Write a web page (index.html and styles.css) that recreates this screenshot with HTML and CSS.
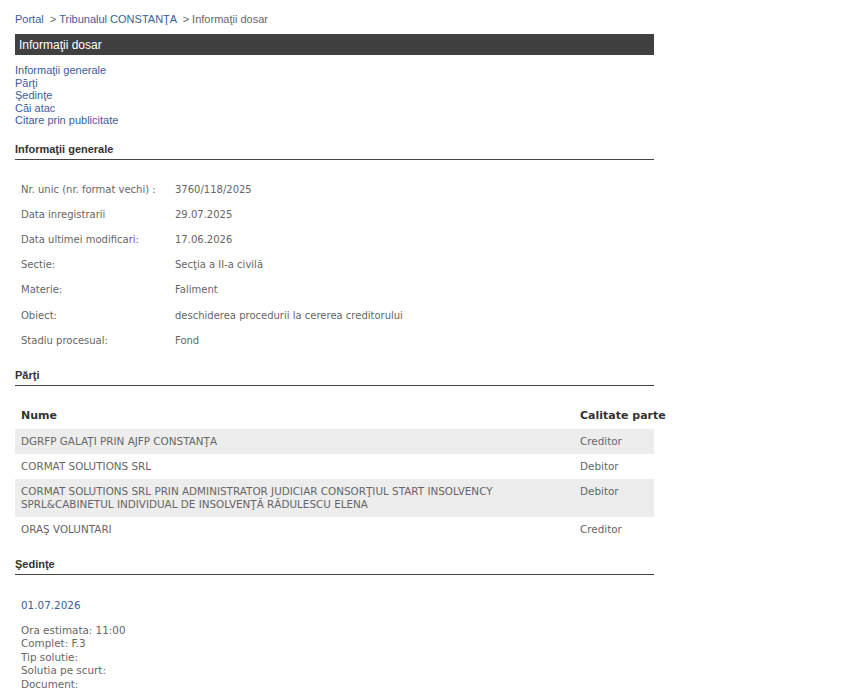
FILE: index.html
```html
<!DOCTYPE html>
<html lang="ro">
<head>
    <meta charset="UTF-8">
    <title>Informaţii dosar</title>
    <link rel="stylesheet" href="styles.css">
</head>
<body>
    <div class="page">
        <div class="breadcrumb">
            <a href="#">Portal</a> &nbsp;&gt; <a href="#">Tribunalul CONSTANŢA</a> &nbsp;&gt; Informaţii dosar
        </div>

        <div class="title-bar">Informaţii dosar</div>

        <ul class="anchors">
            <li><a href="#generale">Informaţii generale</a></li>
            <li><a href="#parti">Părţi</a></li>
            <li><a href="#sedinte">Şedinţe</a></li>
            <li><a href="#cai">Căi atac</a></li>
            <li><a href="#citare">Citare prin publicitate</a></li>
        </ul>

        <h2 class="section-title" id="generale">Informaţii generale</h2>
        <table class="info">
            <tr><td class="label">Nr. unic (nr. format vechi) :</td><td>3760/118/2025</td></tr>
            <tr><td class="label">Data inregistrarii</td><td>29.07.2025</td></tr>
            <tr><td class="label">Data ultimei modificari:</td><td>17.06.2026</td></tr>
            <tr><td class="label">Sectie:</td><td>Secţia a II-a civilă</td></tr>
            <tr><td class="label">Materie:</td><td>Faliment</td></tr>
            <tr><td class="label">Obiect:</td><td>deschiderea procedurii la cererea creditorului</td></tr>
            <tr><td class="label">Stadiu procesual:</td><td>Fond</td></tr>
        </table>

        <h2 class="section-title" id="parti">Părţi</h2>
        <table class="parties">
            <colgroup>
                <col>
                <col class="role-col">
            </colgroup>
            <thead>
                <tr><th>Nume</th><th>Calitate parte</th></tr>
            </thead>
            <tbody>
                <tr><td>DGRFP GALAŢI PRIN AJFP CONSTANŢA</td><td>Creditor</td></tr>
                <tr><td>CORMAT SOLUTIONS SRL</td><td>Debitor</td></tr>
                <tr><td>CORMAT SOLUTIONS SRL PRIN ADMINISTRATOR JUDICIAR CONSORŢIUL START INSOLVENCY SPRL&amp;CABINETUL INDIVIDUAL DE INSOLVENŢĂ RĂDULESCU ELENA</td><td>Debitor</td></tr>
                <tr><td>ORAŞ VOLUNTARI</td><td>Creditor</td></tr>
            </tbody>
        </table>

        <h2 class="section-title" id="sedinte">Şedinţe</h2>
        <div class="hearing">
            <div class="hearing-date">01.07.2026</div>
            <div class="hearing-details">
                Ora estimata: 11:00<br>
                Complet: F.3<br>
                Tip solutie:<br>
                Solutia pe scurt:<br>
                Document:
            </div>
        </div>
    </div>
</body>
</html>
```

FILE: styles.css
```css
body {
    margin: 0;
    background: #fff;
    font-family: "Liberation Sans", Arial, sans-serif;
    color: #555;
}
a {
    color: #3b5e98;
    text-decoration: none;
}
.page {
    width: 639px;
    padding: 12px 15px 0;
}
.breadcrumb {
    font-size: 11px;
    color: #666;
    line-height: 14px;
}
.title-bar {
    margin-top: 8px;
    background: #404040;
    color: #fff;
    font-size: 12px;
    line-height: 20px;
    padding: 1px 4px 0;
    height: 21px;
    box-sizing: border-box;
}
.anchors {
    list-style: none;
    margin: 9px 0 0;
    padding: 0;
    font-size: 11px;
    line-height: 12.5px;
}
.section-title {
    font-size: 11px;
    font-weight: bold;
    color: #333;
    margin: 15px 0 0;
    padding-bottom: 3px;
    border-bottom: 1px solid #444;
    line-height: 14px;
}
.info {
    border-collapse: collapse;
    margin-top: 17px;
    font-family: "DejaVu Sans", Verdana, sans-serif;
    font-size: 10px;
    color: #666;
}
.info td {
    padding: 0 6px;
    height: 25.2px;
    vertical-align: middle;
}
.info td.label {
    width: 142px;
}
.parties {
    width: 100%;
    table-layout: fixed;
    border-collapse: collapse;
    margin-top: 18px;
    font-family: "DejaVu Sans", Verdana, sans-serif;
    font-size: 10.4px;
    color: #666;
}
.parties .role-col {
    width: 80px;
}
.parties th {
    text-align: left;
    font-size: 11px;
    color: #333;
    padding: 5px 6px 7px;
    white-space: nowrap;
}
.parties td {
    padding: 6.5px 6px 5.5px;
    line-height: 13px;
    vertical-align: top;
}
.parties tbody tr:nth-child(odd) {
    background: #ededed;
}
.hearing {
    font-family: "DejaVu Sans", Verdana, sans-serif;
    font-size: 10.4px;
    color: #666;
    padding: 0 6px;
}
.hearing-date {
    color: #3b5e98;
    margin-top: 24px;
}
.hearing-details {
    margin-top: 13px;
    line-height: 13.5px;
}
```
